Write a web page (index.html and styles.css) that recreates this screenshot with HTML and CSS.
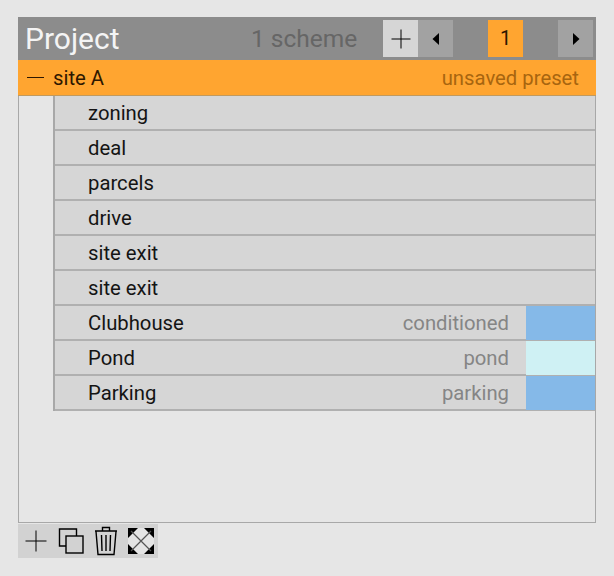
FILE: index.html
```html
<!DOCTYPE html>
<html lang="en">
<head>
  <meta charset="UTF-8" />
  <title>Project</title>
  <link rel="stylesheet" href="styles.css">
</head>
<body>
  <div class="window">
    <div class="panel">
      <div class="header">
        <div class="title">Project</div>
        <div class="count">1 scheme</div>
        <button class="btn btn-add">
          <svg width="20" height="20" viewBox="0 0 20 20"><path d="M10 0.500V19.500M0.500 10H19.500" stroke="#000" stroke-width="1" fill="none"/></svg>
        </button>
        <button class="btn btn-nav">
          <svg width="8" height="12" viewBox="0 0 8 12"><path d="M7 0V12L0.500 6Z" fill="#000"/></svg>
        </button>
        <div class="pager"><span class="page">1</span></div>
        <button class="btn btn-nav">
          <svg width="8" height="12" viewBox="0 0 8 12"><path d="M1 0V12L7.500 6Z" fill="#000"/></svg>
        </button>
      </div>

      <div class="site">
        <span class="dash"></span>
        <span class="site-name">site A</span>
        <span class="site-note">unsaved preset</span>
      </div>

      <div class="rows">
        <div class="row"><span class="row-name">zoning</span></div>
        <div class="row"><span class="row-name">deal</span></div>
        <div class="row"><span class="row-name">parcels</span></div>
        <div class="row"><span class="row-name">drive</span></div>
        <div class="row"><span class="row-name">site exit</span></div>
        <div class="row"><span class="row-name">site exit</span></div>
        <div class="row">
          <span class="row-name">Clubhouse</span>
          <span class="row-type">conditioned</span>
          <span class="swatch blue"></span>
        </div>
        <div class="row">
          <span class="row-name">Pond</span>
          <span class="row-type">pond</span>
          <span class="swatch aqua"></span>
        </div>
        <div class="row">
          <span class="row-name">Parking</span>
          <span class="row-type">parking</span>
          <span class="swatch blue"></span>
        </div>
      </div>
    </div>

    <div class="toolbar">
      <button class="tool">
        <svg width="22" height="22" viewBox="0 0 22 22"><path d="M11 0.500V21.500M0.500 11H21.500" stroke="#000" stroke-width="1" fill="none"/></svg>
      </button>
      <button class="tool">
        <svg width="26" height="26" viewBox="0 0 26 26" fill="none" stroke="#000" stroke-width="1.400"><path d="M8 18H1.500V1H18.500V8"/><rect x="8" y="8" width="17" height="17"/></svg>
      </button>
      <button class="tool">
        <svg width="24" height="30" viewBox="0 0 24 30" fill="none" stroke="#000" stroke-width="1.400"><path d="M1 5H23M8.500 5V1.500H15.500V5M2 5.500L4 28.500H20L22 5.500M7.500 9L8 25M12 9V25M16.500 9L16 25"/></svg>
      </button>
      <button class="tool">
        <svg width="26" height="26" viewBox="0 0 26 26"><path d="M9 0H17L26 9V17L17 26H9L0 17V9Z" fill="#e4e4e4"/><path d="M0 0H10L0 10ZM26 0H16L26 10ZM0 26H10L0 16ZM26 26H16L26 16Z" fill="#000"/><path d="M3 3L23 23M23 3L3 23" stroke="#555" stroke-width="1.200" fill="none"/></svg>
      </button>
    </div>
  </div>
</body>
</html>
```

FILE: styles.css
```css
html, body {
  margin: 0;
  padding: 0;
  height: 100%;
  font-family: Roboto, sans-serif;
  background-color: #e6e6e6;
}

.window {
  height: 576px;
  box-sizing: border-box;
  padding: 17px 18px 0 18px;
}

.panel {
  height: 506px;
  box-sizing: border-box;
  border: 1px solid #a8a8a8;
  border-top: none;
  background-color: #e6e6e6;
}

.header {
  display: flex;
  align-items: center;
  height: 43px;
  margin-left: -1px;
  margin-right: -1px;
  padding: 3px 3px 3px 7px;
  box-sizing: border-box;
  background-color: #8c8c8c;
}

.title {
  font-size: 30px;
  color: #f4f4f4;
  width: 226px;
}

.count {
  font-size: 24.500px;
  color: #666;
  width: 132px;
}

.btn {
  display: flex;
  align-items: center;
  justify-content: center;
  width: 35px;
  height: 37px;
  padding: 0;
  border: none;
}

.btn-add {
  background-color: #d6d6d6;
}

.btn-nav {
  background-color: #a2a2a2;
}

.pager {
  display: flex;
  justify-content: center;
  width: 105px;
}

.page {
  width: 35px;
  height: 37px;
  line-height: 37px;
  text-align: center;
  font-size: 20px;
  color: #2a1600;
  background-color: #ffa530;
}

.site {
  display: flex;
  align-items: center;
  height: 36px;
  margin-left: -1px;
  margin-right: -1px;
  padding: 0 17px 0 9px;
  box-sizing: border-box;
  background-color: #ffa530;
  border-bottom: 1px solid #c09a60;
  font-size: 20.300px;
  color: #2e1700;
}

.dash {
  width: 17px;
  height: 1px;
  background-color: #2e1700;
  margin-right: 9px;
}

.site-note {
  margin-left: auto;
  color: #a8650f;
}

.rows {
  margin-left: 34px;
  border-left: 2px solid #a8a8a8;
}

.row {
  display: flex;
  align-items: center;
  height: 35px;
  box-sizing: border-box;
  padding-left: 33px;
  background-color: #d6d6d6;
  border-bottom: 2px solid #b0b0b0;
  font-size: 20.300px;
  color: #141414;
}

.row-name {
  margin-top: 1px;
}

.row-type {
  margin-left: auto;
  margin-top: 1px;
  margin-right: 17px;
  color: #858585;
}

.swatch {
  width: 69px;
  height: 34px;
  margin-top: 1px;
}

.blue {
  background-color: #85b9e8;
}

.aqua {
  background-color: #cff1f4;
}

.toolbar {
  display: flex;
  width: 140px;
  height: 34px;
  margin-top: 1px;
  background-color: #d2d2d2;
}

.tool {
  display: flex;
  align-items: center;
  justify-content: center;
  width: 35px;
  height: 34px;
  padding: 0;
  border: none;
  background: none;
}
```
